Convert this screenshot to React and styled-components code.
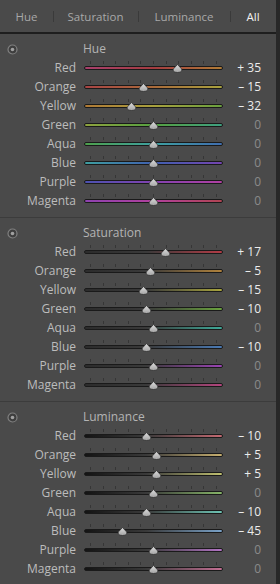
import styled, { createGlobalStyle } from "styled-components";

const GlobalStyle = createGlobalStyle`
  html, body {
    margin: 0;
    padding: 0;
    background: #4a4a4a;
  }
  body {
    font-family: "Open Sans", "Noto Sans", sans-serif;
    font-size: 11px;
  }
`;

const TABS = ["Hue", "Saturation", "Luminance", "All"];

// left / middle / right colour of each hue track
const HUE_TRACKS = {
  Red: ["#a8406c", "#a43c40", "#b07c36"],
  Orange: ["#a84444", "#aa6a3a", "#a8a23e"],
  Yellow: ["#b07a36", "#a8a03e", "#6aa03e"],
  Green: ["#8ea23e", "#56a040", "#3ea080"],
  Aqua: ["#4ea04c", "#3ea0a0", "#406eb0"],
  Blue: ["#3e9ea0", "#4060b0", "#7444b0"],
  Purple: ["#4c52b0", "#8242b0", "#b040a2"],
  Magenta: ["#8e42b0", "#b0409c", "#b04452"],
};

const PURE = {
  Red: "#b23c46",
  Orange: "#b0823c",
  Yellow: "#a8a43e",
  Green: "#6aa23e",
  Aqua: "#3ea898",
  Blue: "#4a7ab4",
  Purple: "#9a44b4",
  Magenta: "#b4467e",
};

const LIGHT = {
  Red: "#c46a72",
  Orange: "#c8b070",
  Yellow: "#c0c070",
  Green: "#86b468",
  Aqua: "#6ec4b4",
  Blue: "#7aa2c8",
  Purple: "#b274c4",
  Magenta: "#c47094",
};

const SECTIONS = [
  {
    title: "Hue",
    kind: "hue",
    values: { Red: 35, Orange: -15, Yellow: -32, Green: 0, Aqua: 0, Blue: 0, Purple: 0, Magenta: 0 },
  },
  {
    title: "Saturation",
    kind: "sat",
    values: { Red: 17, Orange: -5, Yellow: -15, Green: -10, Aqua: 0, Blue: -10, Purple: 0, Magenta: 0 },
  },
  {
    title: "Luminance",
    kind: "lum",
    values: { Red: -10, Orange: 5, Yellow: 5, Green: 0, Aqua: -10, Blue: -45, Purple: 0, Magenta: 0 },
  },
];

function trackGradient(kind, name) {
  if (kind === "hue") {
    const [a, b, c] = HUE_TRACKS[name];
    return `linear-gradient(to right, ${a}, ${b} 50%, ${c})`;
  }
  if (kind === "sat") {
    return `linear-gradient(to right, #2c2c2c, #3a3a3a 45%, ${PURE[name]})`;
  }
  return `linear-gradient(to right, #141414, #3a3a3a 45%, ${LIGHT[name]})`;
}

function formatValue(v) {
  if (v === 0) return "0";
  return v > 0 ? `+ ${v}` : `\u2013 ${Math.abs(v)}`;
}

function TargetIcon() {
  return (
    <svg width="11" height="11" viewBox="0 0 11 11">
      <circle cx="5.5" cy="5.5" r="4.5" fill="#3e3e3e" stroke="#808080" strokeWidth="1.2" />
      <circle cx="5.5" cy="5.5" r="1.8" fill="#a0a0a0" />
    </svg>
  );
}

function Thumb() {
  return (
    <svg width="11" height="9" viewBox="0 0 11 9">
      <defs>
        <linearGradient id="thumbFill" x1="0" y1="0" x2="0" y2="1">
          <stop offset="0" stopColor="#dcdcdc" />
          <stop offset="1" stopColor="#a4a4a4" />
        </linearGradient>
      </defs>
      <path
        d="M5.5 0.5 L9.3 4.6 Q10.5 6 9.6 7.2 Q8.6 8.5 5.5 8.5 Q2.4 8.5 1.4 7.2 Q0.5 6 1.7 4.6 Z"
        fill="url(#thumbFill)"
        stroke="#2e2e2e"
        strokeWidth="0.8"
      />
    </svg>
  );
}

function Slider({ kind, name, value }) {
  const ticks = Array.from({ length: 11 });
  return (
    <SliderBox>
      <Ticks>
        {ticks.map((_, i) => (
          <Tick key={i} />
        ))}
      </Ticks>
      <Track $bg={trackGradient(kind, name)} />
      <ThumbSpot style={{ left: `${((value + 100) / 200) * 100}%` }}>
        <Thumb />
      </ThumbSpot>
    </SliderBox>
  );
}

function Section({ title, kind, values }) {
  return (
    <SectionBox>
      <SectionHeader>
        <IconCell>
          <TargetIcon />
        </IconCell>
        <SectionTitle>{title}</SectionTitle>
      </SectionHeader>
      {Object.keys(values).map((name) => (
        <Row key={name}>
          <Label>{name}</Label>
          <Slider kind={kind} name={name} value={values[name]} />
          <Value $zero={values[name] === 0}>{formatValue(values[name])}</Value>
        </Row>
      ))}
    </SectionBox>
  );
}

export default function App() {
  return (
    <>
      <GlobalStyle />
      <Panel>
        <TabBar>
          {TABS.map((t, i) => (
            <Tab key={t} $active={t === "All"} $first={i === 0}>
              {t}
            </Tab>
          ))}
        </TabBar>
        {SECTIONS.map((s) => (
          <Section key={s.title} {...s} />
        ))}
      </Panel>
    </>
  );
}

const Panel = styled.div`
  width: 280px;
  height: 584px;
  box-sizing: border-box;
  background: #4a4a4a;
  border-right: 4px solid #282828;
  overflow: hidden;
`;

const TabBar = styled.div`
  height: 32px;
  display: grid;
  grid-template-columns: 53px 85px 92px 1fr;
  border-bottom: 2px solid #1e1e1e;
`;

const Tab = styled.div`
  position: relative;
  display: flex;
  align-items: center;
  justify-content: center;
  font-size: 11.5px;
  color: ${(p) => (p.$active ? "#f2f2f2" : "#a8a8a8")};
  padding-top: 1px;

  &::before {
    content: "";
    display: ${(p) => (p.$first ? "none" : "block")};
    position: absolute;
    left: 0;
    top: 11px;
    height: 11px;
    width: 1px;
    background: #3a3a3a;
  }
`;

const SectionBox = styled.div`
  padding: 6px 0 7px;
  & + & {
    border-top: 1px solid #3c3c3c;
  }
`;

const SectionHeader = styled.div`
  height: 17px;
  display: grid;
  grid-template-columns: 24px 1fr;
  align-items: center;
  margin-bottom: 1px;
`;

const IconCell = styled.div`
  display: flex;
  justify-content: center;
  padding-top: 2px;
`;

const SectionTitle = styled.div`
  padding-left: 59px;
  font-size: 12px;
  color: #b4b4b4;
`;

const Row = styled.div`
  height: 19px;
  display: grid;
  grid-template-columns: 76px 139px 30px;
  column-gap: 8px;
  align-items: center;
`;

const Label = styled.div`
  text-align: right;
  font-size: 12px;
  color: #bcbcbc;
  line-height: 19px;
`;

const Value = styled.div`
  text-align: right;
  font-size: 12px;
  line-height: 19px;
  color: ${(p) => (p.$zero ? "#8a8a8a" : "#ececec")};
`;

const SliderBox = styled.div`
  position: relative;
  height: 19px;
  display: flex;
  flex-direction: column;
`;

const Ticks = styled.div`
  margin: 3px 6px 0;
  height: 3px;
  display: flex;
  justify-content: space-between;
`;

const Tick = styled.div`
  width: 1px;
  height: 3px;
  background: #363636;
`;

const Track = styled.div`
  margin-top: 2px;
  height: 2px;
  border: 1px solid #1a1a1a;
  border-radius: 2px;
  background: ${(p) => p.$bg};
`;

const ThumbSpot = styled.div`
  position: absolute;
  top: 6px;
  width: 11px;
  height: 9px;
  margin-left: -5.5px;
  line-height: 0;
`;
